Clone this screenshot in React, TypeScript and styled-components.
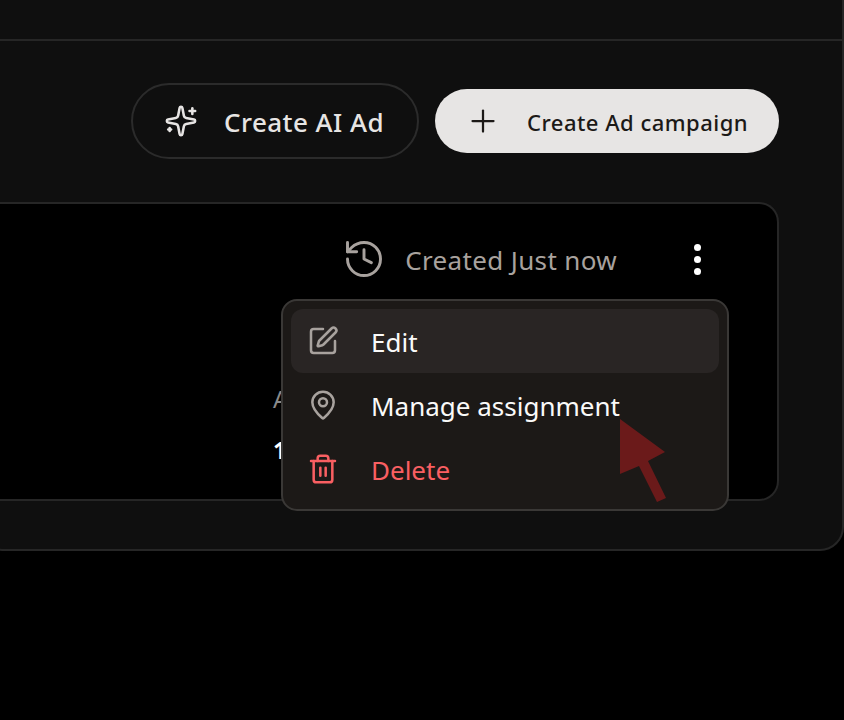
import React from "react";
import styled, { createGlobalStyle } from "styled-components";
import { Plus, History, SquarePen, MapPin, Trash2 } from "lucide-react";

const Global = createGlobalStyle`
  html, body { margin: 0; padding: 0; background: #000; overflow: hidden; }
  body { font-family: "Noto Sans", "Open Sans", sans-serif; }
`;

const Panel = styled.div`
  box-sizing: border-box;
  width: 864px;
  height: 551px;
  margin-left: -20px;
  background: #0f0f0f;
  border: 2px solid #262626;
  border-top: none;
  border-radius: 0 0 24px 24px;
  display: flex;
  flex-direction: column;
`;

const TopBar = styled.div`
  flex: none;
  box-sizing: border-box;
  height: 41px;
  border-bottom: 2px solid #262626;
`;

const Toolbar = styled.div`
  flex: none;
  height: 161px;
  padding: 42px 63px 0 0;
  box-sizing: border-box;
  display: flex;
  justify-content: flex-end;
  align-items: flex-start;
  gap: 16px;
`;

const OutlineButton = styled.button`
  box-sizing: border-box;
  height: 76px;
  width: 288px;
  padding: 0 0 0 31px;
  display: flex;
  align-items: center;
  gap: 26px;
  background: transparent;
  border: 2px solid #2b2b2b;
  border-radius: 38px;
  color: #e7e5e4;
  font: 500 26px "Noto Sans", sans-serif;
  letter-spacing: 0.45px;
  white-space: nowrap;
`;

const SolidButton = styled.button`
  box-sizing: border-box;
  height: 64px;
  width: 344px;
  margin-top: 6px;
  padding: 0 0 0 30px;
  display: flex;
  align-items: center;
  gap: 26px;
  background: #e7e5e4;
  border: none;
  border-radius: 32px;
  color: #1c1917;
  font: 500 22px "Noto Sans", sans-serif;
  letter-spacing: 0.48px;
  white-space: nowrap;
`;

const Label = styled.span`
  margin-top: 2px;
`;

const Card = styled.div`
  position: relative;
  box-sizing: border-box;
  height: 299px;
  margin-right: 63px;
  background: #000;
  border: 2px solid #262626;
  border-left: none;
  border-radius: 0 20px 20px 0;
`;

const MetaRow = styled.div`
  display: flex;
  justify-content: flex-end;
  align-items: center;
  height: 114px;
  padding: 0 76px 4px 0;
  box-sizing: border-box;
  color: #a8a29e;
  font-size: 26px;
  letter-spacing: 0.35px;
`;

const MetaLabel = styled.span`
  margin: 2px 77px 0 19px;
  white-space: nowrap;
`;

const Dots = styled.div`
  display: flex;
  flex-direction: column;
  gap: 5px;
`;

const Dot = styled.span`
  width: 7px;
  height: 7px;
  border-radius: 50%;
  background: #fff;
`;

const HiddenColumn = styled.div`
  position: absolute;
  left: 291px;
  top: 178px;
  display: flex;
  flex-direction: column;
  gap: 18px;
  font-size: 24px;
`;

const HiddenLabel = styled.span`
  color: #8a8a8a;
`;

const HiddenValue = styled.span`
  color: #fff;
  font-weight: 700;
`;

const Menu = styled.div`
  position: absolute;
  left: 299px;
  top: 95px;
  box-sizing: border-box;
  width: 448px;
  height: 212px;
  padding: 8px;
  background: #1c1917;
  border: 2px solid #3a3836;
  border-radius: 16px;
  display: flex;
  flex-direction: column;
`;

const MenuItem = styled.div<{ $active?: boolean; $danger?: boolean }>`
  flex: none;
  height: 64px;
  padding-left: 16px;
  display: flex;
  align-items: center;
  gap: 32px;
  border-radius: 12px;
  background: ${(p) => (p.$active ? "#292524" : "transparent")};
  color: ${(p) => (p.$danger ? "#f95f62" : "#fafaf9")};
  font-size: 26px;
  svg { color: ${(p) => (p.$danger ? "#f95f62" : "#a8a29e")}; flex: none; }
`;

const Cursor = styled.svg`
  position: absolute;
  left: 0;
  top: 0;
  pointer-events: none;
`;

const SparklesIcon = () => (
  <svg width="34" height="34" viewBox="0 0 24 24" fill="none" stroke="currentColor" strokeWidth="1.8" strokeLinecap="round" strokeLinejoin="round">
    <path d="M11.017 2.814a1 1 0 0 1 1.966 0l1.051 5.558a2 2 0 0 0 1.594 1.594l5.558 1.051a1 1 0 0 1 0 1.966l-5.558 1.051a2 2 0 0 0-1.594 1.594l-1.051 5.558a1 1 0 0 1-1.966 0l-1.051-5.558a2 2 0 0 0-1.594-1.594l-5.558-1.051a1 1 0 0 1 0-1.966l5.558-1.051a2 2 0 0 0 1.594-1.594z" />
    <path d="M20 3v4" />
    <path d="M22 5h-4" />
    <path d="M4 17v2" />
    <path d="M5 18H3" />
  </svg>
);

export default function App() {
  return (
    <>
      <Global />
      <Panel>
        <TopBar />
        <Toolbar>
          <OutlineButton>
            <SparklesIcon />
            <Label>Create AI Ad</Label>
          </OutlineButton>
          <SolidButton>
            <Plus size={36} strokeWidth={1.5} />
            <Label>Create Ad campaign</Label>
          </SolidButton>
        </Toolbar>
        <Card>
          <MetaRow>
            <History size={44} strokeWidth={1.6} />
            <MetaLabel>Created Just now</MetaLabel>
            <Dots>
              <Dot />
              <Dot />
              <Dot />
            </Dots>
          </MetaRow>
          <HiddenColumn>
            <HiddenLabel>A</HiddenLabel>
            <HiddenValue>1</HiddenValue>
          </HiddenColumn>
          <Menu>
            <MenuItem $active>
              <SquarePen size={32} strokeWidth={1.9} />
              <Label>Edit</Label>
            </MenuItem>
            <MenuItem>
              <MapPin size={32} strokeWidth={1.9} />
              <Label>Manage assignment</Label>
            </MenuItem>
            <MenuItem $danger>
              <Trash2 size={32} strokeWidth={1.9} />
              <Label>Delete</Label>
            </MenuItem>
          </Menu>
        </Card>
      </Panel>
      <Cursor width="844" height="720" viewBox="0 0 844 720">
        <polygon points="620,419 665,452 648,461 666,498 657,502 639,466 620,474" fill="#6b1a1a" />
      </Cursor>
    </>
  );
}
